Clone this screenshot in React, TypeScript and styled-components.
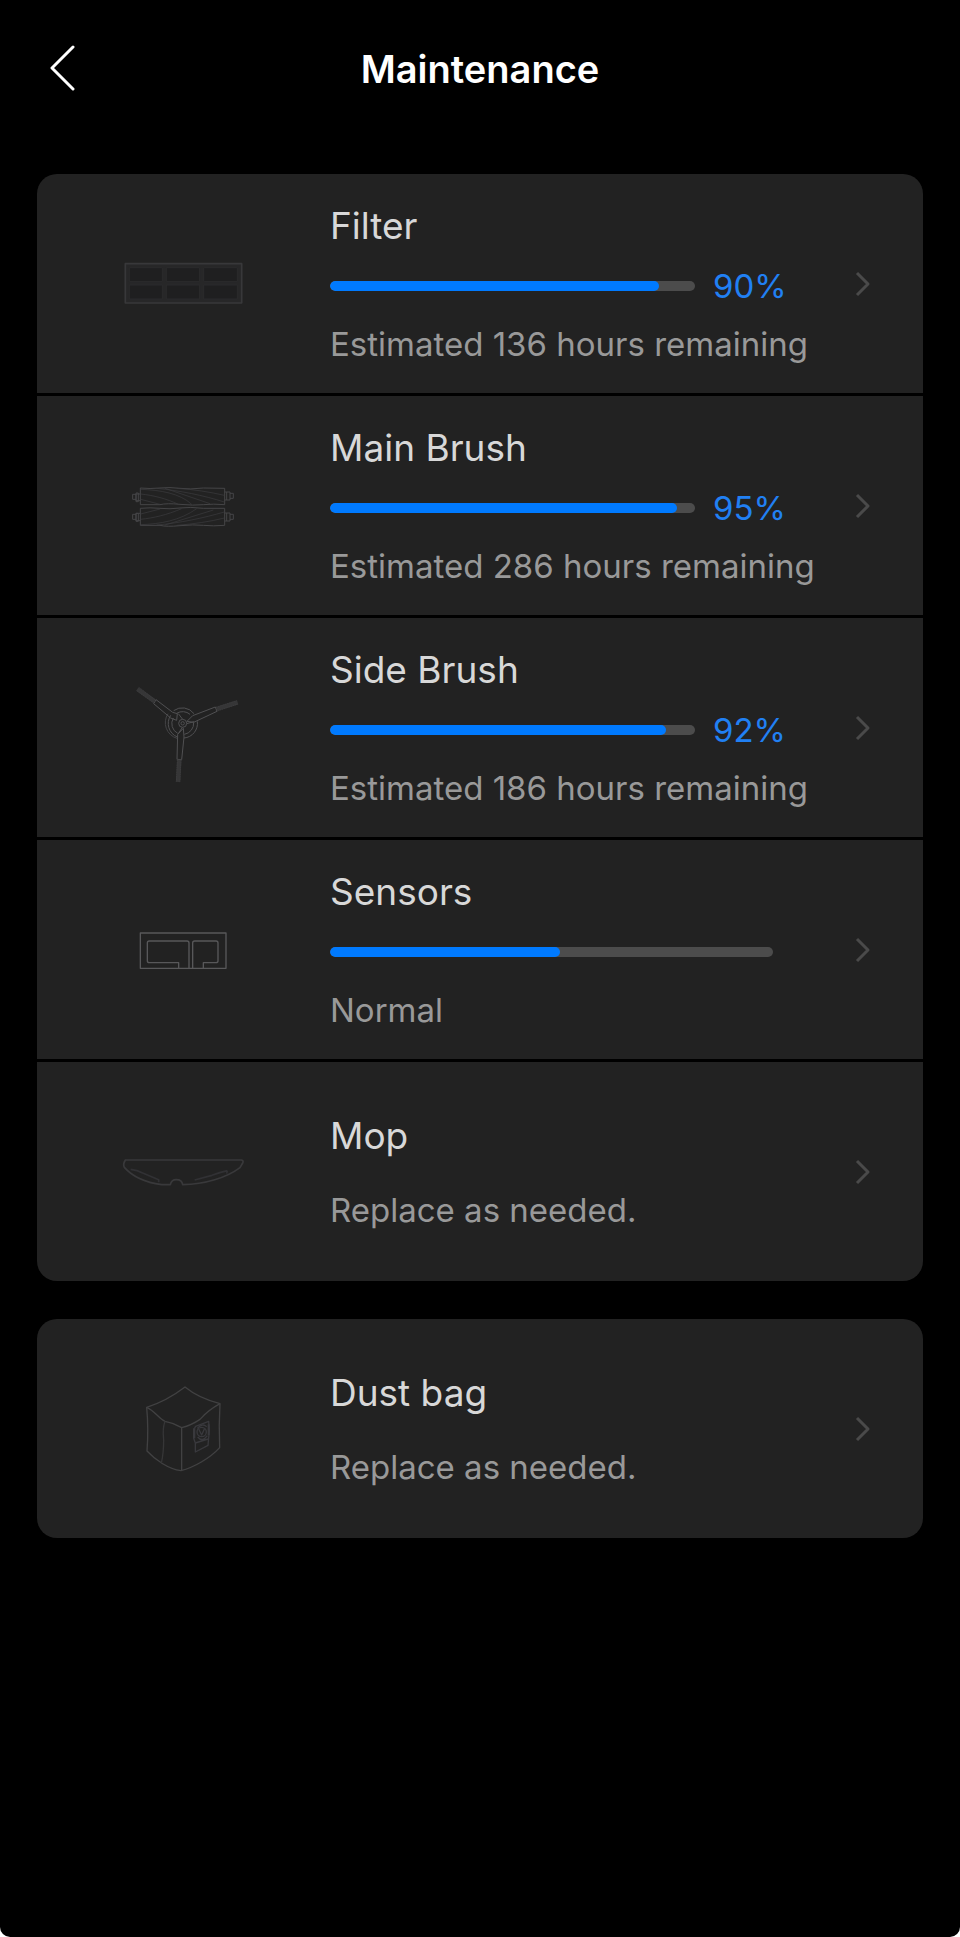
import React from 'react';
import styled, { createGlobalStyle } from 'styled-components';

const GlobalStyle = createGlobalStyle`
  * { box-sizing: border-box; }
  html { background: #fff; }
  body { margin: 0; font-family: Inter, "Liberation Sans", sans-serif; }
`;

const Screen = styled.div`
  min-height: 100vh;
  background: #000;
  border-radius: 0 0 10px 10px;
  padding-bottom: 36px;
`;

const Header = styled.header`
  display: grid;
  grid-template-columns: 88px 1fr 88px;
  align-items: center;
  height: 138px;
  padding: 0 18px;
`;

const BackButton = styled.button`
  display: flex;
  align-items: center;
  justify-content: center;
  height: 88px;
  padding: 0;
  border: 0;
  background: none;
  color: #fff;
  cursor: pointer;
`;

const Title = styled.h1`
  margin: 0;
  text-align: center;
  font-size: 38px;
  font-weight: 600;
  line-height: 48px;
  color: #fff;
`;

const Content = styled.main`
  display: flex;
  flex-direction: column;
  gap: 38px;
  padding: 36px 37px 0;
`;

const Card = styled.ul`
  display: flex;
  flex-direction: column;
  gap: 3px;
  margin: 0;
  padding: 0;
  list-style: none;
  border-radius: 20px;
  overflow: hidden;
`;

const RowLink = styled.a`
  display: grid;
  grid-template-columns: 293px minmax(0, 1fr) 16px;
  align-items: center;
  min-height: 219px;
  padding-right: 52px;
  background: #222;
  color: inherit;
  text-decoration: none;
`;

const Picture = styled.div`
  display: flex;
  justify-content: center;
  padding-right: 2px;
`;

const Body = styled.div<{ $roomy: boolean }>`
  display: flex;
  flex-direction: column;
  gap: ${(p) => (p.$roomy ? 28 : 13)}px;
`;

const Name = styled.h2`
  margin: 0;
  font-size: 37px;
  font-weight: 400;
  line-height: 48px;
  color: #d8d8d8;
`;

const Note = styled.p`
  margin: 0;
  font-size: 33px;
  font-weight: 400;
  line-height: 44px;
  white-space: nowrap;
  color: #999;
`;

const Meter = styled.div<{ $inset: number }>`
  display: flex;
  align-items: center;
  gap: 18px;
  height: 46px;
  padding-right: ${(p) => p.$inset}px;
`;

const Track = styled.div`
  flex: 1;
  height: 10px;
  border-radius: 5px;
  background: #4c4c4c;
  overflow: hidden;
`;

const Fill = styled.div`
  height: 100%;
  border-radius: 5px;
  background: #007aff;
`;

const Percent = styled.span`
  width: 72px;
  font-size: 33px;
  line-height: 44px;
  white-space: nowrap;
  color: #2180f3;
`;

const Drawing = styled.svg`
  width: 140px;
  height: 120px;
  fill: none;
  stroke: #3d3d3f;
  stroke-width: 3;
  stroke-linejoin: round;
`;

const FilterIcon = () => (
  <Drawing viewBox="39 -51 420 360" aria-hidden="true">
    <rect x="76" y="68" width="349" height="118" fill="#272728" stroke="#38383a" strokeWidth="5" />
    <g fill="#1f1f20" stroke="#2b2b2c" strokeWidth="3">
      <rect x="88" y="80" width="99" height="42" />
      <rect x="199" y="80" width="100" height="42" />
      <rect x="311" y="80" width="101" height="42" />
      <rect x="88" y="132" width="99" height="42" />
      <rect x="199" y="132" width="100" height="42" />
      <rect x="311" y="132" width="101" height="42" />
    </g>
  </Drawing>
);

const MainBrushIcon = () => (
  <Drawing viewBox="9 -60 420 360" aria-hidden="true">
    <g stroke="#454547">
      <path d="M91 66 Q120 69 150 66 T210 67 T280 66 L344 67 V116 Q310 113 280 116 T210 115 T150 116 L91 116 Z" />
      <path d="M91 127 Q120 124 150 127 T210 126 T280 127 L344 127 V178 Q310 181 280 178 T210 179 T150 178 L91 178 Z" />
      <path d="M91 84 H78 V104 H91 M78 81 H85 V107 H78 Z M78 85 H68 V100 H78" />
      <path d="M91 142 H78 V164 H91 M78 142 H85 V166 H78 Z M78 145 H68 V160 H78" />
      <path d="M344 78 H360 V102 H344 M350 78 V102 M360 82 H370 V97 H360" />
      <path d="M344 141 H360 V165 H344 M350 141 V165 M360 145 H370 V160 H360" />
    </g>
    <g strokeWidth="2">
      <path d="M92 70 C150 72 210 82 245 115 M92 84 C130 88 170 98 205 115 M92 100 L150 115 M140 67 C210 74 280 88 343 108 M200 67 C250 70 300 78 343 88 M165 67 L300 113" />
      <path d="M92 176 C150 174 210 164 260 128 M92 160 C130 156 170 147 215 128 M92 144 L150 129 M140 177 C210 171 280 156 343 138 M200 178 C250 174 300 167 343 156 M165 177 L310 132" />
    </g>
  </Drawing>
);

const SideBrushIcon = () => (
  <Drawing viewBox="-21 -9 420 360" aria-hidden="true">
    <g stroke="#505052">
      <path d="M152 133 A44 44 0 0 0 172 198 M192 201 A44 44 0 0 0 232 151 M222 128 A44 44 0 0 0 161 119" />
      <path d="M144 128 A49 49 0 0 0 171 202" stroke="#434345" />
      <path d="M160 141 A33 33 0 0 0 173 187 M193 190 A34 34 0 0 0 221 154 M210 130 A34 34 0 0 0 170 127" />
      <circle cx="188" cy="157" r="12" />
      <circle cx="188" cy="157" r="5" />
      <path d="M108 86 L158 124 L172 128 L170 148 L152 141 L101 98 Z" />
      <path d="M286 108 L218 134 L201 151 L221 154 L291 121 Z" />
      <path d="M173 190 L190 172 L192 198 L185 266 L171 265 Z" />
      <path d="M188 145 L175 128 M200 158 L222 152 M187 169 L175 188" />
    </g>
    <g stroke="#363637" strokeWidth="13">
      <path d="M104 91 L52 54" />
      <path d="M290 114 L353 94" />
      <path d="M178 266 L174 333" />
    </g>
    <g stroke="#404041" strokeWidth="2">
      <path d="M106 87 L56 48 M101 96 L50 59" strokeDasharray="5 2" />
      <path d="M287 109 L350 89 M292 120 L354 99" strokeDasharray="5 2" />
      <path d="M172 266 L169 332 M183 266 L180 332" strokeDasharray="5 2" />
    </g>
  </Drawing>
);

const SensorsIcon = () => (
  <Drawing viewBox="-21 -75 420 360" aria-hidden="true">
    <g stroke="#58585a" strokeWidth="4">
      <rect x="61" y="54" width="257" height="106" />
      <path d="M176 160 V143 H88 Q82 143 82 137 V84 Q82 78 88 78 H201 Q207 78 207 84 V160" />
      <path d="M218 160 V84 Q218 78 224 78 H288 Q294 78 294 84 V137 Q294 143 288 143 H250 V160" />
    </g>
  </Drawing>
);

const MopIcon = () => (
  <Drawing viewBox="9 -99 420 360" aria-hidden="true">
    <g stroke="#39393b" strokeWidth="5">
      <path d="M46 45 H394 Q402 47 398 54 L390 68 C350 98 285 118 218 119 Q216 104 199 104 Q184 104 181 119 H155 C105 112 65 92 43 67 Q38 58 46 45 Z" />
      <path d="M62 73 Q82 75 98 84 L146 104 V112 M352 77 Q330 82 306 91 L254 105 M352 77 L350 86" stroke="#313134" />
    </g>
  </Drawing>
);

const DustBagIcon = () => (
  <Drawing viewBox="-51 -18 420 360" aria-hidden="true">
    <g stroke="#414142" strokeWidth="4">
      <path d="M165 36 Q205 69 270 86 Q266 150 269 218 C240 250 190 278 153 287 C115 282 75 254 51 228 Q56 160 50 97 Q110 78 165 36 Z" />
      <path d="M50 97 C75 108 85 130 105 139 Q130 143 155 158 Q185 150 210 133 Q235 105 270 86 M155 158 V287" />
      <path d="M105 139 Q97 160 101 195 Q101 235 94 264" stroke="#363637" />
    </g>
    <g stroke="#39393d" strokeWidth="4">
      <path d="M197 154 L236 139 L238 166 L234 211 L196 231 V204 L191 190 V163 Z" />
      <circle cx="215" cy="171" r="14" />
      <path d="M202 160 Q217 143 230 155 M203 186 Q217 203 232 182 M196 204 L234 192 M206 162 L215 180 L224 160" />
      <path d="M193 160 V190 M236 148 V180" strokeWidth="6" />
    </g>
  </Drawing>
);

const BackArrow = () => (
  <svg width="26" height="48" viewBox="0 0 26 48" fill="none" stroke="currentColor" strokeWidth="3" strokeLinecap="round" strokeLinejoin="round" aria-hidden="true">
    <path d="M24 2 L3 23 L24 44" />
  </svg>
);

const RowArrow = () => (
  <svg width="16" height="26" viewBox="0 0 16 26" fill="none" stroke="#4a4a4a" strokeWidth="3" strokeLinejoin="round" aria-hidden="true">
    <path d="M2 2 L13 13 L2 24" />
  </svg>
);

type Part = {
  name: string;
  note: string;
  icon: () => React.JSX.Element;
  level?: number;
  showPercent?: boolean;
};

const robotParts: Part[] = [
  { name: 'Filter', note: 'Estimated 136 hours remaining', icon: FilterIcon, level: 90, showPercent: true },
  { name: 'Main Brush', note: 'Estimated 286 hours remaining', icon: MainBrushIcon, level: 95, showPercent: true },
  { name: 'Side Brush', note: 'Estimated 186 hours remaining', icon: SideBrushIcon, level: 92, showPercent: true },
  { name: 'Sensors', note: 'Normal', icon: SensorsIcon, level: 52 },
  { name: 'Mop', note: 'Replace as needed.', icon: MopIcon },
];

const dockParts: Part[] = [{ name: 'Dust bag', note: 'Replace as needed.', icon: DustBagIcon }];

const PartRow = ({ name, note, icon: Icon, level, showPercent = false }: Part) => (
  <li>
    <RowLink href="#">
      <Picture>
        <Icon />
      </Picture>
      <Body $roomy={level === undefined}>
        <Name>{name}</Name>
        {level !== undefined && (
          <Meter $inset={showPercent ? 70 : 82}>
            <Track role="progressbar" aria-label={name} aria-valuenow={level} aria-valuemin={0} aria-valuemax={100}>
              <Fill style={{ width: `${level}%` }} />
            </Track>
            {showPercent && <Percent>{level}%</Percent>}
          </Meter>
        )}
        <Note>{note}</Note>
      </Body>
      <RowArrow />
    </RowLink>
  </li>
);

const PartList = ({ parts }: { parts: Part[] }) => (
  <Card>
    {parts.map((part) => (
      <PartRow key={part.name} {...part} />
    ))}
  </Card>
);

export default function App() {
  return (
    <>
      <GlobalStyle />
      <Screen>
        <Header>
          <BackButton type="button" aria-label="Back">
            <BackArrow />
          </BackButton>
          <Title>Maintenance</Title>
        </Header>
        <Content>
          <PartList parts={robotParts} />
          <PartList parts={dockParts} />
        </Content>
      </Screen>
    </>
  );
}
